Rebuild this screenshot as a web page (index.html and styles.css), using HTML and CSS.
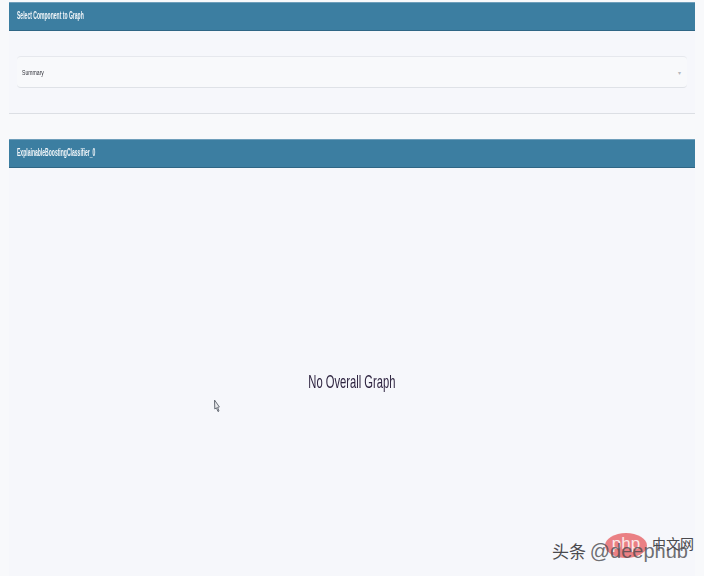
FILE: index.html
```html
<!DOCTYPE html>
<html lang="en">
<head>
<meta charset="utf-8">
<title>Select Component to Graph</title>
<link rel="stylesheet" href="styles.css">
</head>
<body>
<main class="page">
  <section class="card card-select">
    <header class="card-header"><span class="card-title">Select Component to Graph</span></header>
    <div class="card-body">
      <div class="dropdown">
        <span class="dropdown-label">Summary</span>
        <span class="dropdown-arrow">▾</span>
      </div>
    </div>
  </section>
  <section class="card card-graph">
    <header class="card-header"><span class="card-title">ExplainableBoostingClassifier_0</span></header>
    <div class="graph-body">
      <span class="graph-empty">No Overall Graph</span>
      <svg class="cursor" width="7" height="14" viewBox="0 0 7 14" aria-hidden="true">
        <path d="M1.5 1 L1.8 10 L3.4 8.8 L5 12.6 L6 12 L4.6 8.4 L6.4 8 Z" fill="#e8e9ec" stroke="#6a6f78" stroke-width="1"/>
      </svg>
    </div>
  </section>
</main>
<div class="watermark">
  <span class="wm-badge">php</span>
  <span class="wm-site">中文网</span>
  <span class="wm-author">头条 <span class="wm-handle">@deephub</span></span>
</div>
</body>
</html>
```
FILE: styles.css
```css
* { box-sizing: border-box; }
html, body { margin: 0; height: 100%; }
body {
  background: #f8f9fb;
  font-family: "Liberation Sans", Arial, sans-serif;
  color: #2a2a33;
  overflow: hidden;
  position: relative;
}
.page {
  display: flex;
  flex-direction: column;
  gap: 25px;
  padding: 2px 9px 0;
  height: 576px;
}
.card {
  background: #f6f7fb;
  display: flex;
  flex-direction: column;
}
.card-select {
  height: 112px;
  border-bottom: 1px solid #dcdfe4;
}
.card-graph { flex: 1; }
.card-header {
  height: 29px;
  flex: none;
  background: #3c7ea1;
  border-top: 1px solid #6f9fbb;
  border-bottom: 1px solid #2f6685;
  color: #f2f6f9;
  line-height: 22px;
  padding-left: 8px;
}
.card-title {
  display: inline-block;
  font-size: 10px;
  font-weight: 700;
  transform: scaleX(0.505);
  transform-origin: left center;
  white-space: nowrap;
  filter: blur(0.3px);
}
.card-body {
  padding: 25px 8px 0;
  flex: 1;
}
.dropdown {
  height: 32px;
  display: flex;
  align-items: center;
  justify-content: space-between;
  padding: 0 6px 0 5px;
  border-top: 1px solid #e6e8ed;
  border-bottom: 1px solid #dfe2e7;
  border-radius: 4px;
  background: #f8f9fb;
}
.dropdown-label {
  display: inline-block;
  font-size: 8px;
  color: #33343c;
  transform: scaleX(0.64);
  transform-origin: left center;
  filter: blur(0.25px);
}
.dropdown-arrow {
  font-size: 6px;
  color: #b5b8bf;
}
.graph-body {
  flex: 1;
  position: relative;
  display: flex;
  justify-content: center;
  padding-top: 203px;
}
.graph-empty {
  display: inline-block;
  font-size: 19px;
  line-height: 22px;
  height: 22px;
  color: #2e2440;
  white-space: nowrap;
  transform: scaleX(0.59);
  filter: blur(0.3px);
}
.cursor {
  position: absolute;
  left: 204px;
  top: 231px;
}
.watermark {
  position: absolute;
  left: 552px;
  top: 530px;
  right: 0;
  bottom: 0;
}
.wm-badge {
  position: absolute;
  left: 53px;
  top: 3px;
  width: 42px;
  height: 25px;
  border-radius: 50%;
  background: #ea8084;
  color: #fbe9e9;
  font-size: 17px;
  line-height: 21px;
  text-align: center;
}
.wm-site {
  position: absolute;
  left: 100px;
  top: 2px;
  font-family: "Noto Sans CJK SC", sans-serif;
  font-size: 14px;
  line-height: 22px;
  color: #4a4a4e;
  white-space: nowrap;
}
.wm-author {
  position: absolute;
  left: 0;
  top: 10px;
  font-family: "Noto Sans CJK SC", sans-serif;
  font-size: 17px;
  line-height: 22px;
  color: #4a4a4e;
  white-space: nowrap;
}
.wm-handle {
  font-family: "Liberation Sans", sans-serif;
  font-size: 20px;
  color: rgba(74, 74, 78, 0.8);
}
```
